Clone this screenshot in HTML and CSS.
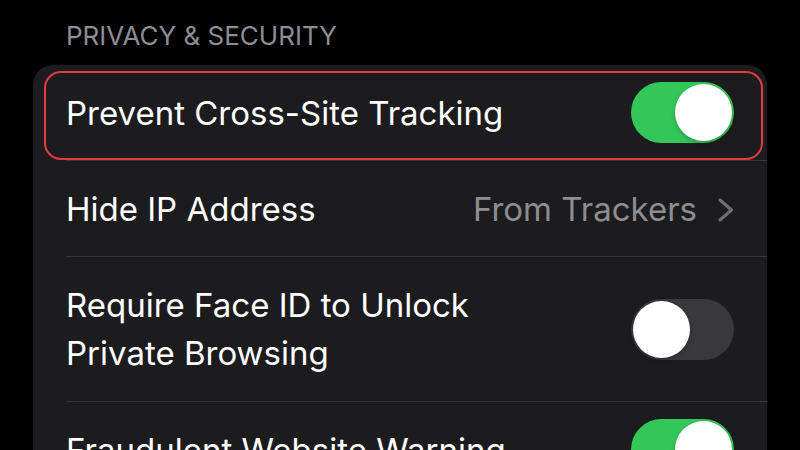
FILE: index.html
```html
<!DOCTYPE html>
<html>
<head>
<meta charset="utf-8">
<link rel="stylesheet" href="styles.css">
</head>
<body>
<div class="screen">
  <div class="section-title">PRIVACY &amp; SECURITY</div>
  <div class="card">
    <div class="row highlighted">
      <div class="row-inner">
        <span class="label">Prevent Cross-Site Tracking</span>
        <span class="toggle on"><span class="knob"></span></span>
      </div>
      <div class="outline"></div>
    </div>
    <div class="row">
      <div class="row-inner">
        <span class="label">Hide IP Address</span>
        <span class="detail">From Trackers
          <svg class="chevron" width="17" height="24" viewBox="0 0 17 24"><path d="M3 2 L14.5 12 L3 22" fill="none" stroke="#6d6d72" stroke-width="3.2" stroke-linecap="round" stroke-linejoin="round"/></svg>
        </span>
      </div>
    </div>
    <div class="row">
      <div class="row-inner tall">
        <span class="label">Require Face ID to Unlock<br>Private Browsing</span>
        <span class="toggle"><span class="knob"></span></span>
      </div>
    </div>
    <div class="row">
      <div class="row-inner last">
        <span class="label">Fraudulent Website Warning</span>
        <span class="toggle on"><span class="knob"></span></span>
      </div>
    </div>
  </div>
</div>
</body>
</html>
```

FILE: styles.css
```css
html, body {
  margin: 0;
  padding: 0;
  background: #000;
}
body {
  width: 800px;
  height: 450px;
  overflow: hidden;
  font-family: Inter, "Liberation Sans", sans-serif;
  color: #fff;
}
.screen {
  padding: 0 33px;
}
.section-title {
  height: 65px;
  box-sizing: border-box;
  padding: 23px 0 0 33px;
  font-size: 26px;
  line-height: 26px;
  color: #8d8d92;
}
.card {
  background: #1c1c1e;
  border-radius: 20px;
  overflow: hidden;
}
.row {
  position: relative;
  padding-left: 33px;
}
.row-inner {
  display: flex;
  align-items: center;
  justify-content: space-between;
  height: 95px;
  padding-right: 33px;
  border-bottom: 1px solid #38383a;
}
.row-inner.tall {
  height: 144px;
}
.row-inner.last {
  border-bottom: none;
}
.label {
  font-size: 33px;
  line-height: 48px;
  color: #fff;
}
.detail {
  display: flex;
  align-items: center;
  gap: 20px;
  font-size: 33px;
  color: #8d8d92;
}
.chevron {
  display: block;
  margin-top: 2px;
}
.toggle {
  position: relative;
  width: 103px;
  height: 61px;
  border-radius: 31px;
  background: #39393d;
  flex: none;
}
.toggle.on {
  background: #33c759;
}
.knob {
  position: absolute;
  top: 2px;
  left: 2px;
  width: 57px;
  height: 57px;
  border-radius: 50%;
  background: #fff;
  box-shadow: 0 2px 4px rgba(0,0,0,0.25);
}
.toggle.on .knob {
  left: auto;
  right: 2px;
}
.outline {
  position: absolute;
  left: 11px;
  top: 6px;
  right: 4px;
  bottom: 1px;
  border: 2.5px solid #e23c3f;
  border-radius: 17px;
  pointer-events: none;
}
```
